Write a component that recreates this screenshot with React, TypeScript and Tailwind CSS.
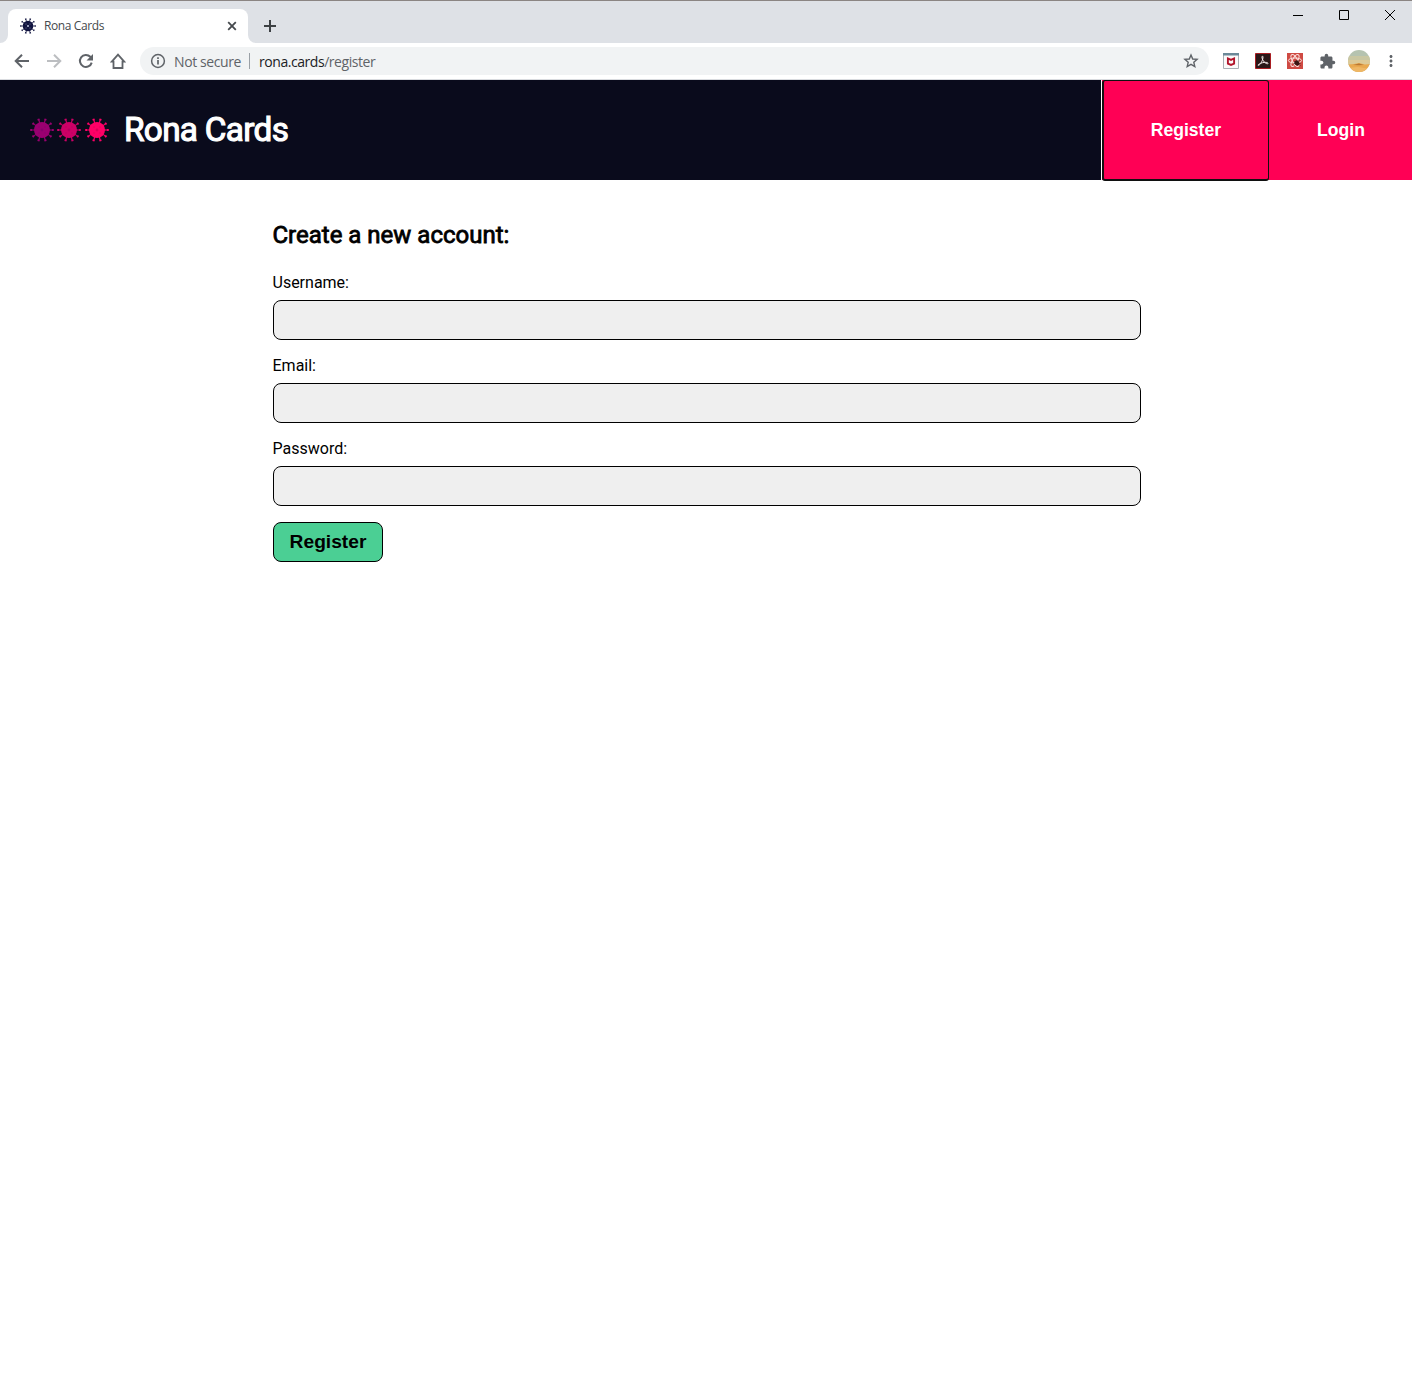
import { MdExtension, MdMoreVert } from "react-icons/md";

const SPIKES = [18, 54, 90, 126, 162, 198, 234, 270, 306, 342];

function Virus({ color, core, size }: { color: string; core: string; size: number }) {
  return (
    <svg width={size} height={size} viewBox="0 0 24 24" fill={color} stroke={color} className="shrink-0">
      {SPIKES.map((a) => (
        <g key={a} transform={`rotate(${a} 12 12)`}>
          <path d="M12 5V1.5" strokeWidth="1.1" />
          <path d="M10.900 1.100h2.200" strokeWidth="1.800" />
        </g>
      ))}
      <circle cx="12" cy="12" r="8" stroke="none" />
      <g fill={core} stroke="none">
        <circle cx="12" cy="12" r="1.400" />
        <circle cx="9" cy="9" r="0.700" />
        <circle cx="15" cy="9" r="0.700" />
        <circle cx="9" cy="15" r="0.700" />
        <circle cx="15" cy="15" r="0.700" />
      </g>
    </svg>
  );
}

function TabStrip() {
  return (
    <div className="flex h-[43px] items-start border-t border-[#8b8583] bg-[#dee1e6]">
      <svg width="8" height="8" viewBox="0 0 8 8" className="mt-[34px] shrink-0 fill-white">
        <path d="M0 8h8V0a8 8 0 0 1-8 8z" />
      </svg>
      <div className="mt-2 flex h-[34px] w-[240px] items-center rounded-t-lg bg-white pr-[10px] pl-3">
        <Virus color="#10133f" core="#c9cee8" size={16} />
        <span className="ml-2 font-['Open_Sans',sans-serif] text-[12px] tracking-[-0.400px] text-[#45494d]">Rona Cards</span>
        <svg width="12" height="12" viewBox="0 0 12 12" className="ml-auto stroke-[#45494d]" strokeWidth="1.8">
          <path d="M2.200 2.200l7.600 7.600M9.800 2.200l-7.600 7.600" />
        </svg>
      </div>
      <svg width="8" height="8" viewBox="0 0 8 8" className="mt-[34px] shrink-0 fill-white">
        <path d="M8 8H0V0a8 8 0 0 0 8 8z" />
      </svg>
      <svg width="14" height="14" viewBox="0 0 14 14" className="mt-[18px] ml-[7px] stroke-[#3c4043]" strokeWidth="2">
        <path d="M7 1v12M1 7h12" />
      </svg>
      <div className="ml-auto flex h-[28px] items-center text-black">
        {["M0 5.500h10", "M.5.5h9v9h-9z", "M0 0l10 10M10 0L0 10"].map((d) => (
          <div key={d} className="flex w-[46px] justify-center pl-px">
            <svg width="10" height="10" viewBox="0 0 10 10" fill="none" stroke="currentColor" strokeWidth="1" className="overflow-visible">
              <path d={d} />
            </svg>
          </div>
        ))}
      </div>
    </div>
  );
}

function McAfee() {
  return (
    <svg width="16" height="16" viewBox="0 0 16 16">
      <path d="M.5.5h15v15H.5z" fill="#fafafa" stroke="#a9afb5" />
      <path d="M0 0h16v2.500H0z" fill="#6b8998" />
      <path d="M4.900 5.500v5.100L8 11.900l3.100-1.300V5.500L8 6.900z" fill="none" stroke="#b2152b" strokeWidth="1.900" />
    </svg>
  );
}

function Acrobat() {
  return (
    <svg width="16" height="16" viewBox="0 0 16 16" fill="none">
      <path d="M.5.5h15v15H.5z" fill="#2a1718" stroke="#a81d22" />
      <path d="M7.300 3.200c1.300-.5.6 3.300-.7 5.700C5.300 11.300 3.700 13 3.100 12.300c-.6-.8 3.200-2.600 6.200-2.900 2.300-.2 4 .3 3.700 1.100-.4 1-3.200-.5-4.600-2.500C7.100 6.100 6.500 3.500 7.300 3.200z" stroke="#f1e8e8" strokeWidth="1" />
    </svg>
  );
}

function ReactTools() {
  return (
    <svg width="16" height="16" viewBox="0 0 16 16" fill="none">
      <path d="M0 0h16v16H0z" fill="#cf4a43" />
      <g stroke="#fbe2de" strokeWidth="1">
        <ellipse cx="8" cy="7.500" rx="6.600" ry="2.500" />
        <ellipse cx="8" cy="7.500" rx="6.600" ry="2.500" transform="rotate(60 8 7.500)" />
        <ellipse cx="8" cy="7.500" rx="6.600" ry="2.500" transform="rotate(120 8 7.500)" />
      </g>
      <ellipse cx="10" cy="10" rx="2.200" ry="2.700" fill="#3b1512" transform="rotate(-35 10 10)" />
      <path d="M7 8.500l6.500 4M7.500 12.500l5-5.500M6.500 10.500h7" stroke="#3b1512" strokeWidth=".7" />
    </svg>
  );
}

function Avatar() {
  return (
    <svg width="22" height="22" viewBox="0 0 22 22" className="rounded-full">
      <path d="M0 0h22v22H0z" fill="#b5c3b0" />
      <path d="M0 6h22v4H0z" fill="#c9c7a2" />
      <path d="M0 10h22v5H0z" fill="#dcca98" />
      <path d="M0 14.500l6-.5 5-1 6 1.500 5-.5v8H0z" fill="#e9a94f" />
      <path d="M5 15l6-1.400 5 1.400-5 .3z" fill="#b97733" />
      <path d="M0 18l10-1 12 2v3H0z" fill="#efb765" />
    </svg>
  );
}

function Toolbar() {
  return (
    <div className="flex h-[37px] items-center border-b border-[#d9dbdf] bg-white text-[#5f6368]">
      <div className="ml-[14px] flex items-center gap-4">
        <svg width="16" height="16" viewBox="0 0 16 16" fill="none" stroke="currentColor" strokeWidth="2">
          <path d="M15 8H2.500M8 1.700L1.700 8 8 14.300" />
        </svg>
        <svg width="16" height="16" viewBox="0 0 16 16" fill="none" stroke="#bcbec1" strokeWidth="2">
          <path d="M1 8h12.500M8 1.700L14.300 8 8 14.300" />
        </svg>
        <svg width="16" height="16" viewBox="0 0 16 16" fill="none" stroke="currentColor" strokeWidth="2">
          <path d="M13.700 9.600A6 6 0 1 1 12.300 3.800L13.500 5" />
          <path d="M15 1v6.500H8.500z" fill="currentColor" stroke="none" />
        </svg>
        <svg width="16" height="16" viewBox="0 0 16 16" fill="none" stroke="currentColor" strokeWidth="1.800">
          <path d="M1.800 8.600H3.500V15h9V8.600h1.700L8 1.700z" />
        </svg>
      </div>
      <div className="ml-[14px] flex h-7 w-[1069px] items-center rounded-full bg-[#f1f3f4] pr-[10px] pl-[10px] font-['Open_Sans',sans-serif] text-[14px]">
        <svg width="16" height="16" viewBox="0 0 16 16" fill="none" stroke="currentColor">
          <circle cx="8" cy="8" r="6.400" strokeWidth="1.500" />
          <path d="M8 7v4.500M8 4.300V6" strokeWidth="1.700" />
        </svg>
        <span className="ml-2 w-[67px] tracking-[-0.400px] whitespace-nowrap">Not secure</span>
        <span className="ml-2 h-4 w-px bg-[#9aa0a6]" />
        <span className="ml-[9px] tracking-[-0.450px]">
          <span className="text-[#202124]">rona.cards</span>/register
        </span>
        <svg width="16" height="16" viewBox="0 0 16 16" fill="none" stroke="currentColor" strokeWidth="1.400" className="ml-auto">
          <path d="M8 2l1.700 4 4.400.400-3.300 2.900 1 4.200L8 11.300l-3.800 2.200 1-4.200L1.900 6.400 6.300 6z" />
        </svg>
      </div>
      <div className="ml-[14px] flex items-center gap-4">
        <McAfee />
        <Acrobat />
        <ReactTools />
        <MdExtension size={17} className="-mr-px" />
        <div className="-mx-[3px]"><Avatar /></div>
        <MdMoreVert size={18} className="-ml-px" />
      </div>
    </div>
  );
}

function Field({ label, type }: { label: string; type: string }) {
  return (
    <label className="mb-4 block text-[16px] leading-[19px]">
      <span className="-ml-[0.500px] block">{label}</span>
      <input type={type} className="mt-2 block h-10 w-full rounded-lg border border-black bg-[#efefef] px-3 outline-none" />
    </label>
  );
}

export default function App() {
  return (
    <div className="min-h-[1383px] bg-white font-[Roboto,sans-serif] text-black">
      <TabStrip />
      <Toolbar />
      <header className="flex h-[100px] items-center bg-[#0a0b1c]">
        <div className="mb-px ml-[29.500px] flex w-[80.500px] gap-[3.500px]">
          <Virus color="#990070" core="#87006c" size={24} />
          <Virus color="#cc0066" core="#b60062" size={24} />
          <Virus color="#ff0066" core="#dd005c" size={24} />
        </div>
        <h1 className="ml-[14px] text-[33.300px] font-normal tracking-[-0.680px] text-white [-webkit-text-stroke:1.100px_white]">Rona Cards</h1>
        <nav className="-mr-px ml-auto flex h-full font-['Liberation_Sans',sans-serif] text-[17.600px] font-bold text-white">
          <button className="relative border-l border-white bg-[#ff0055] px-12 pl-[49px]">
            Register
            <span className="absolute top-0 right-0 -bottom-px left-0 rounded-[3px] border border-b-2 border-l-2 border-[#101010]" />
          </button>
          <button className="bg-[#ff0055] px-12">Login</button>
        </nav>
      </header>
      <main className="ml-[273px] w-[868px] pt-[41px]">
        <h2 className="mb-6 -ml-[0.500px] text-[24px] leading-7 font-normal [-webkit-text-stroke:0.800px_black]">Create a new account:</h2>
        <form>
          <Field label="Username:" type="text" />
          <Field label="Email:" type="email" />
          <Field label="Password:" type="password" />
          <button type="button" className="h-10 w-[110px] rounded-lg border border-black bg-[#4bcf94] font-['Liberation_Sans',sans-serif] text-[19.200px] font-bold">
            Register
          </button>
        </form>
      </main>
    </div>
  );
}
